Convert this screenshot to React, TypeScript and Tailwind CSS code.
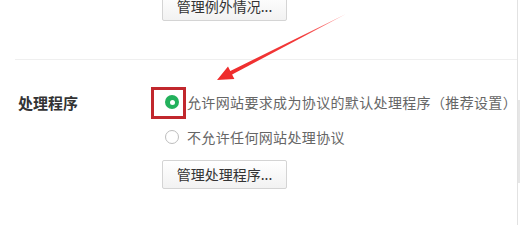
import React from "react";

const font = { fontFamily: '"Noto Sans CJK SC", "Noto Sans", sans-serif' };

function Btn({ children, className = "" }: { children: React.ReactNode; className?: string }) {
  return (
    <div
      className={`flex h-[29px] w-[125px] shrink-0 items-center justify-center rounded-[2px] border border-[#d4d4d4] bg-gradient-to-b from-white to-[#f2f2f2] text-[14px] text-[#333] ${className}`}
    >
      {children}
    </div>
  );
}

export default function App() {
  return (
    <div className="relative flex h-[225px] w-[520px] overflow-hidden bg-white" style={font}>
      <div className="w-[518px] shrink-0 border-r border-[#e2e2e2]">
        <div className="flex h-[59px] items-start pl-[162px]">
          <Btn className="-mt-[8px]">管理例外情况...</Btn>
        </div>
        <div className="ml-[15px] border-t border-[#efefef]" />
        <div className="flex pt-[32px]">
          <div className="w-[165px] shrink-0 pl-[18px] text-[15px] font-bold leading-[22px] text-[#333]">处理程序</div>
          <div className="flex min-w-0 flex-col">
            <div className="relative flex h-[20px] items-center gap-[8px]">
              <span className="flex h-[14px] w-[14px] shrink-0 items-center justify-center rounded-full bg-[#23b15c]">
                <span className="h-[5px] w-[5px] rounded-full bg-white" />
              </span>
              <span className="whitespace-nowrap text-[14px] tracking-[0.35px] text-[#666]">允许网站要求成为协议的默认处理程序（推荐设置）</span>
              <div className="absolute left-[-14px] top-[-5px] h-[32px] w-[35px] border-[3px] border-[#c1272d]" />
            </div>
            <div className="mt-[15px] flex h-[20px] items-center gap-[8px]">
              <span className="h-[14px] w-[14px] shrink-0 rounded-full border border-[#bdbdbd] bg-white" />
              <span className="whitespace-nowrap text-[14px] tracking-[0.35px] text-[#666]">不允许任何网站处理协议</span>
            </div>
            <Btn className="-ml-[3px] mt-[13px]">管理处理程序...</Btn>
          </div>
        </div>
      </div>
      <div className="w-[2px]">
        <div className="mt-[100px] h-[83px] w-[2px] bg-[#e6e6e6]" />
      </div>
      <svg className="pointer-events-none absolute left-0 top-0" width="520" height="225">
        <defs>
          <linearGradient id="ar" x1="346" y1="14" x2="217" y2="80" gradientUnits="userSpaceOnUse">
            <stop offset="0" stopColor="#ff9a9a" />
            <stop offset="0.35" stopColor="#f23a3a" />
            <stop offset="1" stopColor="#ee2a2a" />
          </linearGradient>
        </defs>
        <polygon
          points="217,80 234.4,78.9 232.1,74.5 346,14 230.3,70.9 228,66.5"
          fill="url(#ar)"
        />
      </svg>
    </div>
  );
}
